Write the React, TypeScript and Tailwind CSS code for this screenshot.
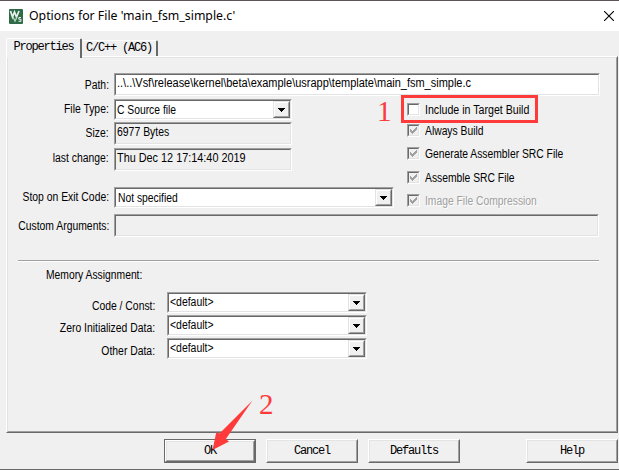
import type { ReactNode } from "react";

const cx = (...c: (string | false | undefined)[]) => c.filter(Boolean).join(" ");

/* Condensed dialog text. */
function T({ children, className = "origin-left scale-x-[.86]" }: { children: ReactNode; className?: string }) {
  return <span className={cx("inline-block whitespace-pre", className)}>{children}</span>;
}

/* Sunken classic frame, two bevel lines deep. */
function Sunken({ children, className }: { children?: ReactNode; className?: string }) {
  return (
    <div className="shrink-0 border border-t-[#a0a0a0] border-l-[#a0a0a0] border-r-white border-b-white">
      <div className={cx("flex border border-t-[#696969] border-l-[#696969] border-r-[#e3e3e3] border-b-[#e3e3e3]", className)}>
        {children}
      </div>
    </div>
  );
}

function Arrow() {
  return (
    <div className="ml-auto h-[17px] w-[17px] border border-t-[#e3e3e3] border-l-[#e3e3e3] border-r-[#696969] border-b-[#696969] bg-[#f0f0f0]">
      <div className="flex h-[15px] w-[15px] items-center justify-center border border-t-white border-l-white border-r-[#a0a0a0] border-b-[#a0a0a0]">
        <svg width="7" height="4" viewBox="0 0 7 4" shapeRendering="crispEdges">
          <path d="M0 0h7v1H0zM1 1h5v1H1zM2 2h3v1H2zM3 3h1v1H3z" />
        </svg>
      </div>
    </div>
  );
}

function Row({ label, pad, className, children }: { label: string; pad: string; className?: string; children: ReactNode }) {
  return (
    <div className={cx("flex items-start", className)}>
      <div className={cx("flex w-[101px] shrink-0 justify-end", pad)}>
        <T className="origin-right scale-x-[.865]">{label}</T>
      </div>
      <div className="ml-[5px]">{children}</div>
    </div>
  );
}

function Check({ label, on, disabled, scale = "origin-left scale-x-[.86]", className }: { label: string; on?: boolean; disabled?: boolean; scale?: string; className?: string }) {
  return (
    <div className={cx("flex h-[13px] items-start", className)}>
      <Sunken className={cx("h-[11px] w-[11px]", on ? "bg-[#f0f0f0]" : "bg-white")}>
        {on && (
          <svg width="9" height="9" viewBox="0 0 9 9" shapeRendering="crispEdges">
            <path
              fill="#a0a0a0"
              d="M1 3h1v3H1zM2 4h1v3H2zM3 5h1v3H3zM4 4h1v3H4zM5 3h1v3H5zM6 2h1v3H6zM7 1h1v3H7z"
            />
          </svg>
        )}
      </Sunken>
      <div className={cx("ml-[5px] h-[14px]", disabled && "text-[#a0a0a0] [text-shadow:1px_1px_0_#fff]")}>
        <T className={scale}>{label}</T>
      </div>
    </div>
  );
}

function Memory({ label, pad, className }: { label: string; pad: string; className?: string }) {
  return (
    <div className={cx("flex items-start", className)}>
      <div className={cx("flex w-[147px] justify-end", pad)}>
        <T className="origin-right scale-x-[.865]">{label}</T>
      </div>
      <div className="ml-[12px]">
        <Sunken className="h-[19px] w-[198px] bg-white">
          <div className="pt-px pl-px">
            <T className="origin-left scale-x-[.87]">{"<default>"}</T>
          </div>
          <Arrow />
        </Sunken>
      </div>
    </div>
  );
}

const MONO = "font-['Liberation_Mono',monospace] text-[12px] tracking-[-1.2px]";

function Button({ label, primary, className }: { label: string; primary?: boolean; className?: string }) {
  return (
    <button className={cx("flex h-[24px] w-[92px]", primary && "border border-[#696969]", className)}>
      <span className="flex h-full w-full border border-t-white border-l-white border-r-[#696969] border-b-[#696969]">
        <span className={cx("flex h-full w-full items-center justify-center border border-t-[#e3e3e3] border-l-[#e3e3e3] border-r-[#a0a0a0] border-b-[#a0a0a0]", MONO)}>
          {label}
        </span>
      </span>
    </button>
  );
}

export default function App() {
  return (
    <div className="relative flex h-[470px] w-[619px] flex-col overflow-hidden bg-[#f0f0f0] font-['Liberation_Sans',Arial,sans-serif] text-[12px] leading-[14px] text-black">
      <header className="flex h-[31px] shrink-0 items-center border-t border-[#5c5558] bg-white">
        <svg className="ml-[9px]" width="14" height="15" viewBox="0 0 14 15">
          <rect width="14" height="15" rx="1" fill="#2f6b47" />
          <path d="M1.5 2l2 6 2-5 2 5 2.5-6" fill="none" stroke="#e8f2ea" strokeWidth="1.7" />
          <path d="M4 8l2 4 2-4" fill="none" stroke="#b9d3c1" strokeWidth="1.3" />
          <path d="M12 8.5H9.8v1.8H12v2H9.5" fill="none" stroke="#e8f2ea" strokeWidth="1" />
        </svg>
        <span className="ml-[6px] font-['Noto_Sans',sans-serif] text-[12.3px] leading-[20px] whitespace-pre">
          Options for File 'main_fsm_simple.c'
        </span>
        <svg className="mr-[5px] ml-auto" width="10" height="10" viewBox="0 0 10 10">
          <path d="M0 0l10 10M10 0L0 10" stroke="#000" strokeWidth="1.1" />
        </svg>
      </header>

      <nav className={cx("z-10 mt-[7px] ml-[6px] flex h-[18px] shrink-0 items-end", MONO)}>
        <div className="-mb-[2px] flex h-[20px] w-[76px] justify-center rounded-t-[2px] border-t border-r-2 border-l border-t-white border-r-[#696969] border-l-white bg-[#f0f0f0] pt-px">
          Properties
        </div>
        <div className="flex h-[16px] w-[76px] justify-center rounded-t-[2px] border-t border-r-2 border-t-white border-r-[#696969]">
          C/C++ (AC6)
        </div>
      </nav>

      <main className="ml-[6px] h-[377px] w-[612px] shrink-0 border border-t-white border-r-[#696969] border-b-[#696969] border-l-white">
        <div className="flex h-[375px] w-[610px] flex-col border border-t-[#e3e3e3] border-r-[#a0a0a0] border-b-[#a0a0a0] border-l-[#e3e3e3] pt-[15px]">
          <Row label="Path:" pad="pt-[5px]">
            <Sunken className="h-[21px] w-[484px] bg-white pt-px pl-px">
              <T className="origin-left scale-x-[.915]">{"..\\..\\Vsf\\release\\kernel\\beta\\example\\usrapp\\template\\main_fsm_simple.c"}</T>
            </Sunken>
          </Row>
          <div className="mt-[3px] flex">
            <div className="w-[386px] shrink-0">
              <Row label="File Type:" pad="pt-[3px]">
                <Sunken className="h-[19px] w-[176px] bg-white">
                  <div className="pt-[2px] pl-px"><T>C Source file</T></div>
                  <Arrow />
                </Sunken>
              </Row>
              <Row label="Size:" pad="pt-[4px]" className="mt-[2px]">
                <Sunken className="h-[21px] w-[176px] pt-px pl-px">
                  <T className="origin-left scale-x-[.87]">6977 Bytes</T>
                </Sunken>
              </Row>
              <Row label="last change:" pad="pt-[3px]" className="mt-[3px]">
                <Sunken className="h-[21px] w-[176px] pt-px pl-px">
                  <T className="origin-left scale-x-[.905]">Thu Dec 12 17:14:40 2019</T>
                </Sunken>
              </Row>
              <Row label="Stop on Exit Code:" pad="pt-[3px]" className="mt-[16px]">
                <Sunken className="h-[19px] w-[278px] bg-white">
                  <div className="pt-[2px] pl-[2px]"><T>Not specified</T></div>
                  <Arrow />
                </Sunken>
              </Row>
            </div>
            <div className="ml-[13px] pt-[4px]">
              <Check label="Include in Target Build" scale="origin-left scale-x-[.885]" />
              <Check label="Always Build" on className="mt-[8px]" />
              <Check label="Generate Assembler SRC File" on className="mt-[10px]" />
              <Check label="Assemble SRC File" on className="mt-[11px]" />
              <Check label="Image File Compression" on disabled className="mt-[10px]" />
            </div>
          </div>
          <Row label="Custom Arguments:" pad="pt-[5px]" className="mt-[6px]">
            <Sunken className="h-[21px] w-[483px]" />
          </Row>
          <div className="mt-[23px] ml-[10px] h-[2px] w-[581px] shrink-0 border-t border-b border-t-[#a0a0a0] border-b-white" />
          <div className="mt-[6px] ml-[38px]"><T>Memory Assignment:</T></div>
          <Memory label="Code / Const:" pad="pt-[7px]" className="mt-[10px]" />
          <Memory label="Zero Initialized Data:" pad="pt-[6px]" className="mt-[2px]" />
          <Memory label="Other Data:" pad="pt-[6px]" className="mt-[2px]" />
        </div>
      </main>

      <footer className="mt-[6px] flex h-[24px] shrink-0 pl-[164px]">
        <Button label="OK" primary />
        <Button label="Cancel" className="ml-[10px]" />
        <Button label="Defaults" className="ml-[10px]" />
        <Button label="Help" className="ml-[66px]" />
      </footer>
      <div className="mt-auto h-px shrink-0 bg-[#696969]" />

      {/* Annotations drawn over the dialog */}
      <div className="absolute top-[95px] left-[401px] h-[28px] w-[137px] border-3 border-[#ff3a3a]" />
      <span className="absolute top-[96px] left-[377px] font-['Liberation_Serif',serif] text-[29px] leading-[30px] text-[#ff3a3a]">1</span>
      <span className="absolute top-[389px] left-[259px] font-['Liberation_Serif',serif] text-[29px] leading-[30px] text-[#ff3a3a]">2</span>
      <svg className="absolute top-[400px] left-[210px]" width="44" height="52" viewBox="210 400 44 52">
        <path d="M252.5 400.5L219.5 433.5L216.3 432.2L212.5 450L229 441.5L225.8 439Z" fill="#ff3a3a" />
      </svg>
    </div>
  );
}
